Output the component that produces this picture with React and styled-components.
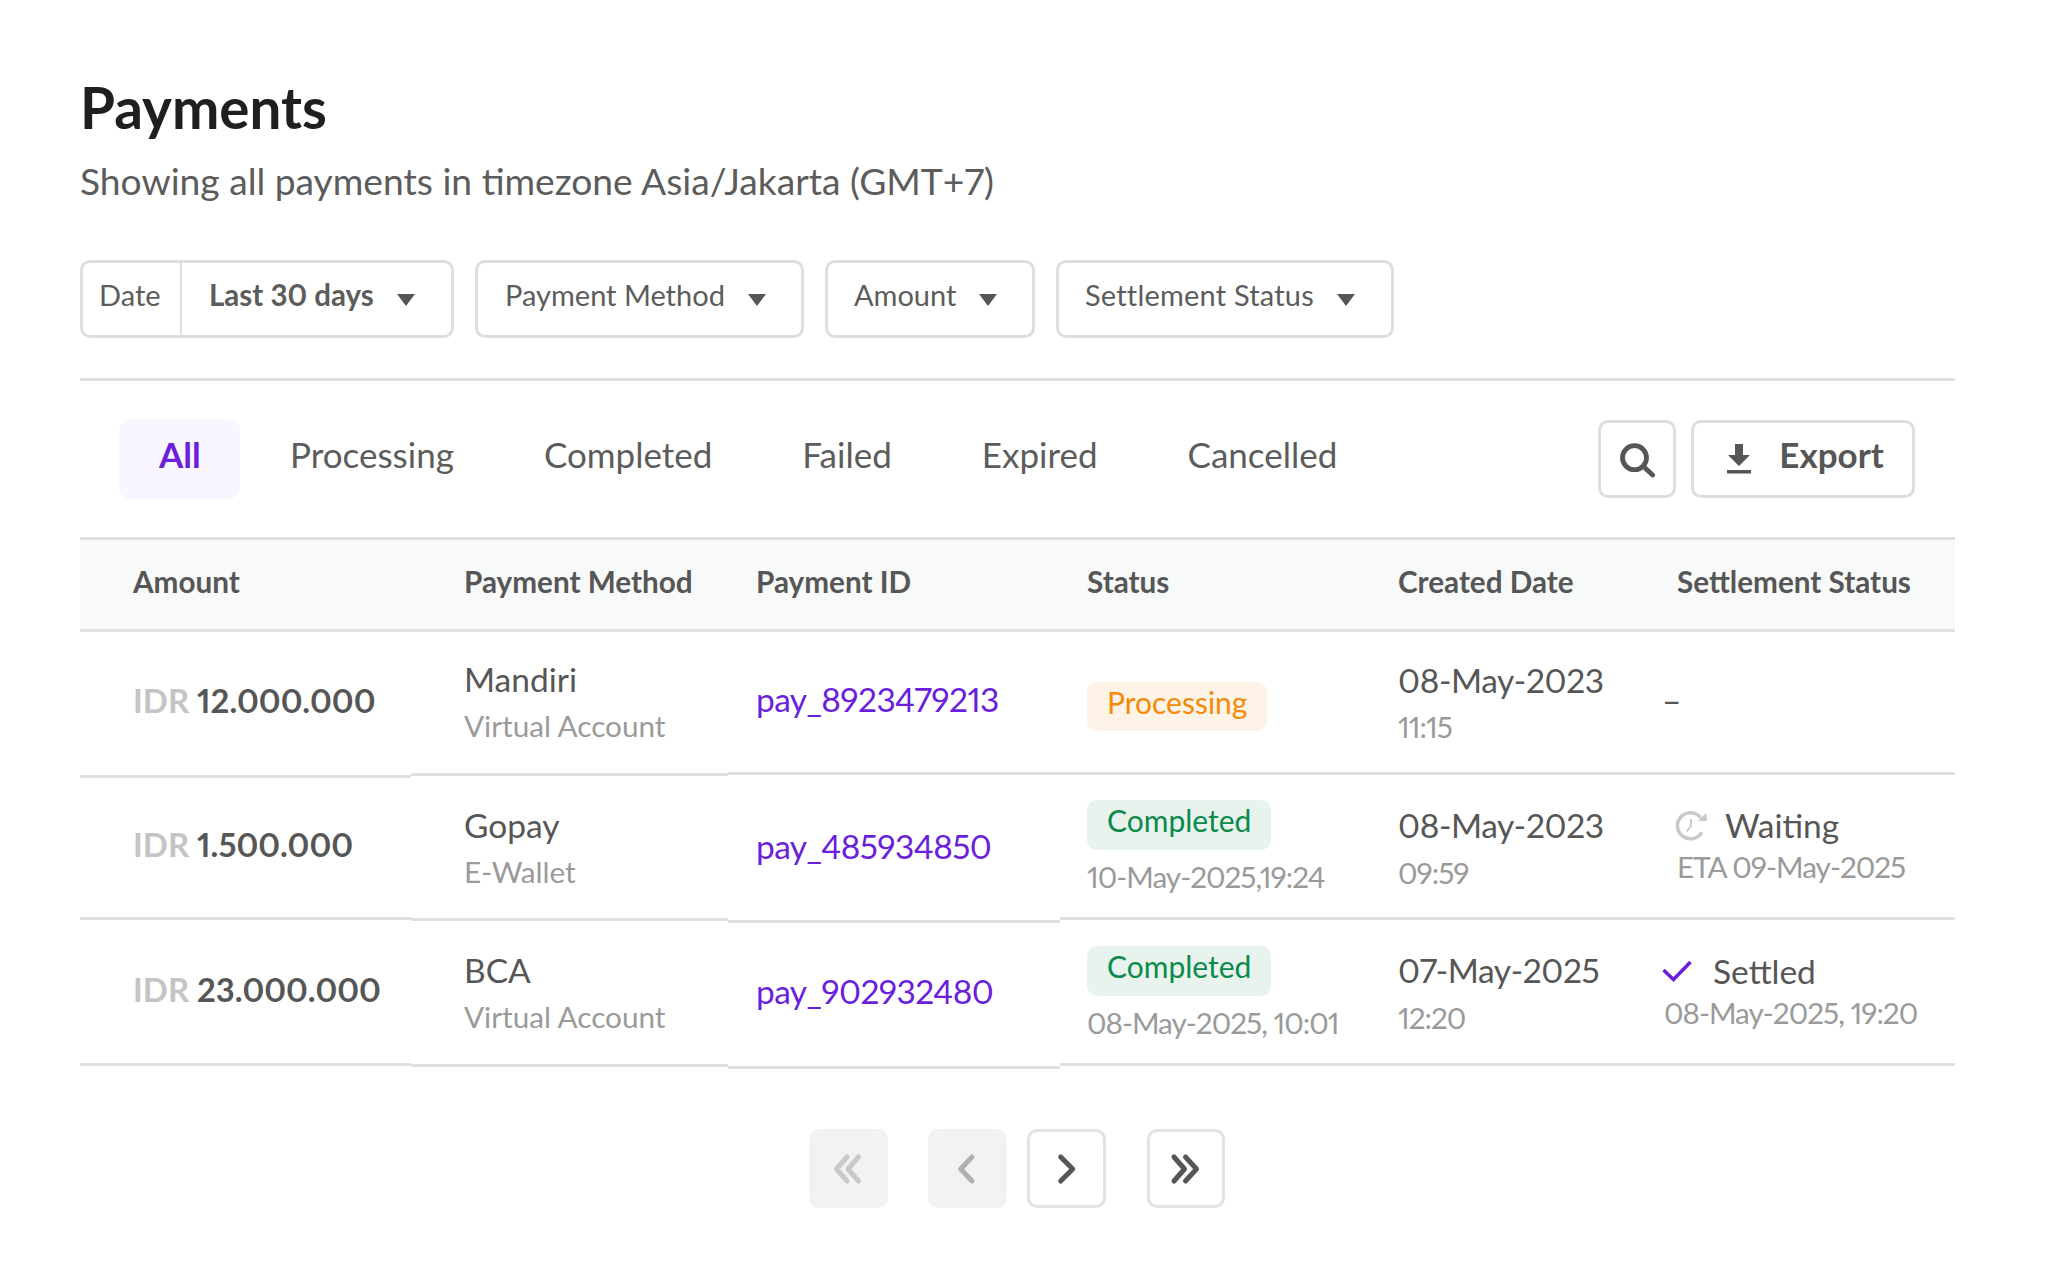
import React from 'react';
import styled, { createGlobalStyle } from 'styled-components';

const GlobalStyle = createGlobalStyle`
  html, body {
    margin: 0;
    padding: 0;
    background: #ffffff;
    font-family: "Lato", "Liberation Sans", sans-serif;
    font-variant-numeric: proportional-nums;
    color: #565656;
  }
`;

const Page = styled.div`
  width: 2048px;
  height: 1268px;
  box-sizing: border-box;
  padding: 75px 93px 0 80px;
`;

const Title = styled.h1`
  margin: 0;
  font-size: 56.6px;
  line-height: 64px;
  font-weight: 700;
  color: #1f1f1f;
`;

const Subtitle = styled.p`
  margin: 19px 0 0;
  font-size: 37.2px;
  line-height: 46px;
  color: #5c5c5c;
`;

const Filters = styled.div`
  display: flex;
  gap: 21px;
  margin-top: 56px;
  padding-bottom: 40px;
  border-bottom: 3px solid #e0e0e0;
`;

const FilterBox = styled.div`
  display: flex;
  box-sizing: border-box;
  width: ${props => props.$width}px;
  height: 78px;
  border: 3px solid #dedede;
  border-radius: 10px;
  font-size: 29px;
  color: #5c5c5c;
`;

const DateLabel = styled.div`
  padding: 14px 0 0 16px;
  width: 99px;
  box-sizing: border-box;
  border-right: 2px solid #dedede;
`;

const FilterValue = styled.div`
  display: flex;
  align-items: flex-start;
  gap: 23px;
  padding: 14px 0 0 ${props => props.$left}px;
  font-weight: ${props => (props.$bold ? 700 : 400)};
  font-size: ${props => (props.$bold ? 29.5 : 29)}px;
  letter-spacing: ${props => props.$spacing || 0}px;
`;

const Caret = styled.span`
  margin-top: 17px;
  width: 0;
  height: 0;
  border-left: 9px solid transparent;
  border-right: 9px solid transparent;
  border-top: 12px solid #565656;
`;

const TabRow = styled.div`
  display: flex;
  align-items: center;
  justify-content: space-between;
  height: 156px;
  padding: 0 40px 0 39px;
`;

const Tabs = styled.div`
  display: flex;
  align-items: flex-start;
  gap: 90px;
`;

const Tab = styled.div`
  box-sizing: border-box;
  height: 80px;
  padding-top: 12px;
  font-size: 35px;
  line-height: 46px;
  color: #5c5c5c;
  ${props => props.$active && `
    width: 121px;
    margin-right: -40px;
    padding-left: 40px;
    border-radius: 12px;
    background: #f9f6ff;
    color: #6b1fdc;
    font-weight: 700;
  `}
`;

const Actions = styled.div`
  display: flex;
  gap: 15px;
`;

const IconButton = styled.div`
  display: flex;
  align-items: center;
  justify-content: center;
  box-sizing: border-box;
  width: 78px;
  height: 78px;
  border: 3px solid #dedede;
  border-radius: 10px;
`;

const ExportButton = styled(IconButton)`
  width: 224px;
  gap: 28px;
  padding-left: 5px;
  font-size: 35px;
  font-weight: 700;
  color: #565656;
`;

const ExportLabel = styled.span`
  padding-bottom: 10px;
`;

const HeadRow = styled.div`
  display: grid;
  grid-template-columns: 331px 317px 332px 311px 279px 1fr;
  align-items: center;
  height: 95px;
  box-sizing: border-box;
  border-top: 3px solid #e0e0e0;
  border-bottom: 3px solid #e0e0e0;
  background: #f8f9f9;
`;

const HeadCell = styled.div`
  padding: 0 0 6px ${props => props.$left}px;
  font-size: 29.7px;
  font-weight: 700;
  color: #565656;
  white-space: nowrap;
`;

const Row = styled.div`
  display: grid;
  grid-template-columns: 331px 317px 332px 311px 279px 1fr;
  align-items: start;
  height: ${props => props.$height}px;
`;

const Cell = styled.div`
  display: flex;
  flex-direction: column;
  justify-content: center;
  box-sizing: border-box;
  height: ${props => props.$height}px;
  padding-left: ${props => props.$left}px;
  padding-bottom: ${props => props.$pad ?? 3}px;
  border-bottom: 3px solid #e0e0e0;
`;

const AmountText = styled.div`
  margin-bottom: 5px;
  font-size: 32.8px;
  font-weight: 700;
  color: #565656;
  span {
    font-size: 33px;
    color: #c4c4c4;
  }
`;

const Main = styled.div`
  font-size: 33.5px;
  line-height: 42px;
  letter-spacing: ${props => (props.$date ? -0.4 : 0)}px;
  color: #565656;
`;

const Sub = styled.div`
  margin-top: ${props => props.$top ?? 8}px;
  font-size: 29.7px;
  line-height: 36px;
  letter-spacing: ${props => (props.$date ? -1 : 0)}px;
  color: #9a9a9a;
  white-space: nowrap;
`;

const PayLink = styled.a`
  margin-bottom: 4px;
  font-size: 33.5px;
  letter-spacing: -0.6px;
  color: #6b1fdc;
`;

const Badge = styled.div`
  box-sizing: border-box;
  align-self: flex-start;
  height: ${props => (props.$tone === 'orange' ? 49 : 50)}px;
  margin-top: ${props => (props.$tone === 'orange' ? 8 : 0)}px;
  padding: 0 20px;
  border-radius: 10px;
  font-size: 30px;
  line-height: 40px;
  background: ${props => (props.$tone === 'orange' ? '#fdf3e7' : '#e8f3ee')};
  color: ${props => (props.$tone === 'orange' ? '#f58a07' : '#0a8a4b')};
`;

const StatusLine = styled.div`
  display: flex;
  align-items: center;
  gap: ${props => props.$gap}px;
  font-size: 33.5px;
  line-height: 42px;
  color: #565656;
`;

const StatusSvg = styled.svg`
  margin-left: -2px;
  flex: none;
`;

const Pager = styled.div`
  display: flex;
  justify-content: center;
  margin-top: 60px;
  padding-right: 2px;
`;

const PageButton = styled.div`
  display: flex;
  align-items: center;
  justify-content: center;
  box-sizing: border-box;
  width: ${props => props.$width || 79}px;
  height: 79px;
  margin-right: ${props => props.$gap || 0}px;
  border-radius: 10px;
  border: 3px solid ${props => (props.$disabled ? '#f2f2f2' : '#e2e2e2')};
  background: ${props => (props.$disabled ? '#f2f2f2' : '#ffffff')};
`;

const Chevron = ({ d, color }) => (
  <svg width="34" height="34" viewBox="0 0 34 34" fill="none" stroke={color} strokeWidth="5" strokeLinecap="round" strokeLinejoin="round">
    {d.map((p, i) => <path key={i} d={p} />)}
  </svg>
);

const SearchIcon = () => (
  <svg width="38" height="38" viewBox="0 0 38 38" fill="none" stroke="#565656" strokeWidth="4.8" strokeLinecap="round">
    <circle cx="16.5" cy="17.7" r="12" />
    <path d="M25.5 26.5 L34.6 35" />
  </svg>
);

const DownloadIcon = () => (
  <svg width="24" height="30" viewBox="0 0 24 30" fill="#565656">
    <path d="M8 0 H16 V11 H23 L12 22 L1 11 H8 Z" />
    <rect x="0" y="26" width="24" height="3.5" />
  </svg>
);

const WaitIcon = () => (
  <StatusSvg width="34" height="32" viewBox="0 0 34 32" fill="none" stroke="#c9c9c9" strokeWidth="3.5" strokeLinecap="round">
    <path d="M24.6 7.6 A13 13 0 1 0 26 24.4" />
    <path d="M16 11 V17 L12 22" strokeWidth="2" />
    <path d="M23 12 H32 L31.3 3.7 Z" fill="#c9c9c9" stroke="none" />
  </StatusSvg>
);

const CheckIcon = () => (
  <StatusSvg width="30" height="22" viewBox="0 0 30 22" fill="none" stroke="#6b1fdc" strokeWidth="3.5">
    <path d="M1.5 10 L11.5 19.5 L28.5 2" />
  </StatusSvg>
);

const tabs = ['Processing', 'Completed', 'Failed', 'Expired', 'Cancelled'];
const heads = [
  ['Amount', 53], ['Payment Method', 53], ['Payment ID', 28],
  ['Status', 27], ['Created Date', 27], ['Settlement Status', 27],
];

export default function App() {
  return (
    <Page>
      <GlobalStyle />
      <Title>Payments</Title>
      <Subtitle>Showing all payments in timezone Asia/Jakarta (GMT+7)</Subtitle>

      <Filters>
        <FilterBox $width={374}>
          <DateLabel>Date</DateLabel>
          <FilterValue $left={27} $bold>Last 30 days<Caret /></FilterValue>
        </FilterBox>
        <FilterBox $width={329}><FilterValue $left={27}>Payment Method<Caret /></FilterValue></FilterBox>
        <FilterBox $width={210}><FilterValue $left={26}>Amount<Caret /></FilterValue></FilterBox>
        <FilterBox $width={338}><FilterValue $left={26} $spacing={0.2}>Settlement Status<Caret /></FilterValue></FilterBox>
      </Filters>

      <TabRow>
        <Tabs>
          <Tab $active>All</Tab>
          {tabs.map(t => <Tab key={t}>{t}</Tab>)}
        </Tabs>
        <Actions>
          <IconButton><SearchIcon /></IconButton>
          <ExportButton><DownloadIcon /><ExportLabel>Export</ExportLabel></ExportButton>
        </Actions>
      </TabRow>

      <HeadRow>
        {heads.map(([label, left]) => <HeadCell key={label} $left={left}>{label}</HeadCell>)}
      </HeadRow>

      <Row $height={146}>
        <Cell $height={146} $left={53}><AmountText><span>IDR</span> 12.000.000</AmountText></Cell>
        <Cell $height={144} $left={53}><Main>Mandiri</Main><Sub>Virtual Account</Sub></Cell>
        <Cell $height={143} $left={28}><PayLink>pay_8923479213</PayLink></Cell>
        <Cell $height={143} $left={27} $pad={0}><Badge $tone="orange">Processing</Badge></Cell>
        <Cell $height={143} $left={27} $pad={1}><Main $date>08-May-2023</Main><Sub $date>11:15</Sub></Cell>
        <Cell $height={143} $left={12} $pad={5}><Main>–</Main></Cell>
      </Row>

      <Row $height={145}>
        <Cell $height={142} $left={53}><AmountText><span>IDR</span> 1.500.000</AmountText></Cell>
        <Cell $height={143} $left={53}><Main>Gopay</Main><Sub>E-Wallet</Sub></Cell>
        <Cell $height={145} $left={28}><PayLink>pay_485934850</PayLink></Cell>
        <Cell $height={142} $left={27} $pad={0}><Badge>Completed</Badge><Sub $date $top={9}>10-May-2025,19:24</Sub></Cell>
        <Cell $height={142} $left={27} $pad={1}><Main $date>08-May-2023</Main><Sub $date $top={9}>09:59</Sub></Cell>
        <Cell $height={142} $left={27} $pad={6}>
          <StatusLine $gap={16}><WaitIcon />Waiting</StatusLine>
          <Sub $date $top={3}>ETA 09-May-2025</Sub>
        </Cell>
      </Row>

      <Row $height={146}>
        <Cell $height={143} $left={53}><AmountText><span>IDR</span> 23.000.000</AmountText></Cell>
        <Cell $height={144} $left={53}><Main>BCA</Main><Sub>Virtual Account</Sub></Cell>
        <Cell $height={146} $left={28}><PayLink>pay_902932480</PayLink></Cell>
        <Cell $height={143} $left={27} $pad={0}><Badge>Completed</Badge><Sub $date $top={9}>08-May-2025, 10:01</Sub></Cell>
        <Cell $height={143} $left={27} $pad={1}><Main $date>07-May-2025</Main><Sub $date $top={9}>12:20</Sub></Cell>
        <Cell $height={143} $left={14} $pad={6}>
          <StatusLine $gap={21}><CheckIcon />Settled</StatusLine>
          <Sub $date $top={3}>08-May-2025, 19:20</Sub>
        </Cell>
      </Row>

      <Pager>
        <PageButton $disabled $gap={40}><Chevron color="#c9c9c9" d={['M16 5 L5.5 17 L16 29', 'M27.5 5 L17 17 L27.5 29']} /></PageButton>
        <PageButton $disabled $gap={20}><Chevron color="#b0b0b0" d={['M22 5 L10.7 17 L22 29']} /></PageButton>
        <PageButton $gap={41}><Chevron color="#565656" d={['M11.7 5 L23.7 17 L11.7 29']} /></PageButton>
        <PageButton $width={78}><Chevron color="#565656" d={['M5 5 L15.5 17 L5 29', 'M16.5 5 L27.5 17 L16.5 29']} /></PageButton>
      </Pager>
    </Page>
  );
}
